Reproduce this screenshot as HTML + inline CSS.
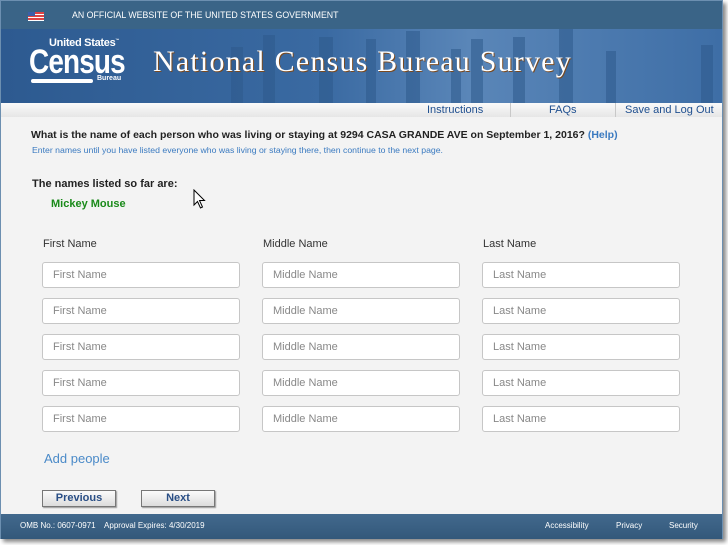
<!DOCTYPE html>
<html><head><meta charset="utf-8"><style>
*{margin:0;padding:0;box-sizing:border-box}
body{width:728px;height:545px;background:#fff;font-family:"Liberation Sans",Arial,sans-serif;position:relative;overflow:hidden}
.frame{position:absolute;left:0;top:0;width:723px;height:539px;background:#f3f3f3;border:1px solid #6c8fb0;box-shadow:3px 3px 4px #888}
.gov{position:absolute;left:0;top:0;width:721px;height:28px;background:#3a6487;color:#fff;font-size:8.8px;line-height:28px}
.banner{position:absolute;left:0;top:28px;width:721px;height:74px;background:linear-gradient(90deg,#2d5a90 0%,#3a6aa2 45%,#5a86b8 65%,#3e6ea6 100%)}
.nav{position:absolute;left:0;top:102px;width:721px;height:14px;background:linear-gradient(#fafafa,#e6e6e6);font-size:11px;color:#1f4f8f;line-height:14px}
.nav span{position:absolute;top:0}
.sep{position:absolute;top:0;width:1px;height:14px;background:#c8c8c8}
.ab{position:absolute;font-size:11px}
input{position:absolute;width:198px;height:26px;border:1px solid #c6c6c6;border-radius:3px;background:#fff;font-family:"Liberation Sans",Arial,sans-serif;font-size:11px;padding-left:10px;color:#777}
input::placeholder{color:#888}
.btn{position:absolute;top:489px;width:74px;height:17px;border:1px solid #777;background:linear-gradient(#fbfbfb,#dcdcdc);box-shadow:1px 1px 1px #999;color:#2a4f86;font-weight:bold;font-size:11px;text-align:center;line-height:15px}
.foot{position:absolute;left:0;top:513px;width:721px;height:25px;background:linear-gradient(#42698d,#33587a);color:#fff;font-size:8px;line-height:23px}
.foot span{position:absolute}
</style></head><body>
<div class="frame">
<div class="gov"><div style="position:absolute;left:27px;top:11px;width:16px;height:9px;background:repeating-linear-gradient(#d44 0 2px,#fff 2px 3px)"><div style="width:7px;height:4px;background:#3b5fa8"></div></div><span style="position:absolute;left:71px">AN OFFICIAL WEBSITE OF THE UNITED STATES GOVERNMENT</span></div>
<div class="banner">
<svg width="721" height="74" style="position:absolute;left:0;top:0" fill="#2e5a8c" opacity=".55">
<rect x="230" y="18" width="12" height="56"/><rect x="262" y="6" width="12" height="68"/><rect x="318" y="8" width="14" height="66"/><rect x="365" y="10" width="10" height="64"/><rect x="405" y="2" width="14" height="72"/><rect x="450" y="20" width="10" height="54"/><rect x="470" y="10" width="12" height="64"/><rect x="512" y="8" width="12" height="66"/><rect x="558" y="0" width="14" height="74"/><rect x="605" y="22" width="10" height="52"/><rect x="700" y="16" width="12" height="58"/>
</svg>
<div style="position:absolute;left:48px;top:8px;color:#fff;font-size:11px;font-weight:bold;letter-spacing:-.3px">United States<sup style="font-size:4px">™</sup></div>
<div style="position:absolute;left:28px;top:14px;color:#fff;font-size:34px;font-weight:bold;letter-spacing:-1px;transform:scaleX(.82);transform-origin:left">Census</div>
<div style="position:absolute;left:30px;top:50px;width:62px;height:4px;background:#fff;border-radius:2px"></div>
<div style="position:absolute;left:96px;top:46px;color:#fff;font-size:7px;font-weight:bold">Bureau</div>
<div style="position:absolute;left:152px;top:16px;color:#fff;font-family:'Liberation Serif',serif;font-size:30px;letter-spacing:1.2px;text-shadow:1px 1px 0 #7a4a20">National Census Bureau Survey</div>
</div>
<div class="nav"><span style="left:426px">Instructions</span><div class="sep" style="left:509px"></div><span style="left:548px">FAQs</span><div class="sep" style="left:614px"></div><span style="left:624px">Save and Log Out</span></div>
<div class="ab" style="left:30px;top:128px;font-weight:bold;color:#222;font-size:10.5px">What is the name of each person who was living or staying at 9294 CASA GRANDE AVE on September 1, 2016? <span style="color:#3a7ac0">(Help)</span></div>
<div class="ab" style="left:31px;top:144px;font-size:8.7px;color:#3a7ac0">Enter names until you have listed everyone who was living or staying there, then continue to the next page.</div>
<div class="ab" style="left:31px;top:177px;font-weight:bold;color:#222">The names listed so far are:</div>
<div class="ab" style="left:50px;top:197px;font-weight:bold;color:#1a8a1a">Mickey Mouse</div>
<div class="ab" style="left:42px;top:237px;color:#333">First Name</div>
<div class="ab" style="left:262px;top:237px;color:#333">Middle Name</div>
<div class="ab" style="left:482px;top:237px;color:#333">Last Name</div>
<input style="left:41px;top:261px" placeholder="First Name"><input style="left:261px;top:261px" placeholder="Middle Name"><input style="left:481px;top:261px" placeholder="Last Name">
<input style="left:41px;top:297px" placeholder="First Name"><input style="left:261px;top:297px" placeholder="Middle Name"><input style="left:481px;top:297px" placeholder="Last Name">
<input style="left:41px;top:333px" placeholder="First Name"><input style="left:261px;top:333px" placeholder="Middle Name"><input style="left:481px;top:333px" placeholder="Last Name">
<input style="left:41px;top:369px" placeholder="First Name"><input style="left:261px;top:369px" placeholder="Middle Name"><input style="left:481px;top:369px" placeholder="Last Name">
<input style="left:41px;top:405px" placeholder="First Name"><input style="left:261px;top:405px" placeholder="Middle Name"><input style="left:481px;top:405px" placeholder="Last Name">
<div class="ab" style="left:43px;top:450px;font-size:13px;color:#4a8ac8">Add people</div>
<div class="btn" style="left:41px">Previous</div>
<div class="btn" style="left:140px">Next</div>
<svg style="position:absolute;left:192px;top:188px" width="14" height="22" viewBox="0 0 14 22"><path d="M1 1 L1 16 L4.5 12.5 L7.5 19 L9.5 18 L6.5 11.5 L11.5 11.5 Z" fill="#fff" stroke="#000" stroke-width="1"/></svg>
<div class="foot"><span style="left:19px">OMB No.: 0607-0971 &nbsp;&nbsp; Approval Expires: 4/30/2019</span><span style="left:544px">Accessibility</span><span style="left:615px">Privacy</span><span style="left:668px">Security</span></div>
</div>
</body></html>
